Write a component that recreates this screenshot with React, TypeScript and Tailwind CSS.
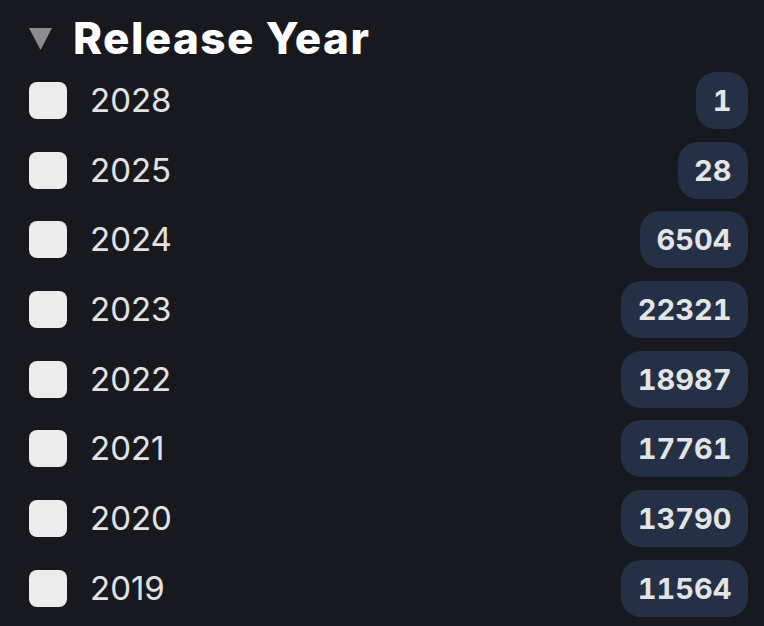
import React from "react";

const rows: [string, string][] = [
  ["2028", "1"],
  ["2025", "28"],
  ["2024", "6504"],
  ["2023", "22321"],
  ["2022", "18987"],
  ["2021", "17761"],
  ["2020", "13790"],
  ["2019", "11564"],
];

export default function App() {
  return (
    <div className="w-[764px] h-[626px] overflow-hidden bg-[#18191f] font-['Inter',sans-serif]">
      <div className="flex items-center h-[72px] pl-[29px] pt-[4px]">
        <svg width="23" height="23" viewBox="0 0 23 23" className="shrink-0">
          <polygon points="0,1 23,1 11.5,23" fill="#8c8c8c" />
        </svg>
        <h2 className="ml-[21px] text-[44px] font-extrabold text-white leading-none tracking-[1.4px]">
          Release Year
        </h2>
      </div>
      <div className="flex flex-col gap-[12.7px] pl-[29px] pr-[16px]">
        {rows.map(([year, count]) => (
          <div key={year} className="flex items-center h-[57px]">
            <div className="w-[38px] h-[37px] rounded-[8px] bg-[#ececec] shrink-0" />
            <span className="ml-[23px] text-[33px] text-[#e2e2e2] leading-none">{year}</span>
            <span className="ml-auto h-[57px] flex items-center px-[16.5px] rounded-[20px] bg-[#243046] text-[#e4e4e4] text-[29px] font-bold leading-none tabular-nums">
              {count}
            </span>
          </div>
        ))}
      </div>
    </div>
  );
}
